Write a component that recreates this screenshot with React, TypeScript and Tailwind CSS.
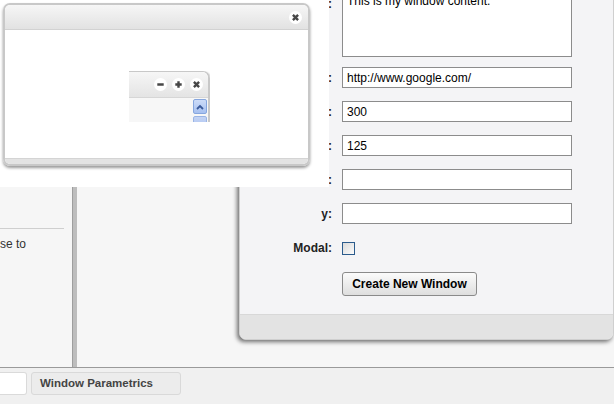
import type { ReactNode } from 'react'

// Small round title-bar buttons (minimise / maximise / close)
function CircleBtn({ kind }: { kind: 'min' | 'max' | 'close' }) {
  return (
    <svg width="13" height="13" viewBox="0 0 13 13" className="block">
      <circle cx="6.5" cy="6.5" r="6.5" fill="#fff" />
      {kind === 'min' && <path d="M3.3 6.5h6.4" stroke="#474747" strokeWidth="2.4" />}
      {kind === 'max' && <path d="M3.3 6.5h6.4M6.5 3.3v6.4" stroke="#474747" strokeWidth="2.4" />}
      {kind === 'close' && <path d="M3.9 3.9l5.2 5.2M9.1 3.9l-5.2 5.2" stroke="#474747" strokeWidth="2.4" />}
    </svg>
  )
}

function Row({ label, top, children, className }: { label: string; top?: boolean; children: ReactNode; className?: string }) {
  return (
    <div className={`flex ${top ? 'items-start' : 'items-center'} gap-[10px] ${className ?? ''}`}>
      <label className={`w-[92px] shrink-0 text-right text-[12px] font-bold text-[#222] leading-[14px] ${top ? 'pt-[4px]' : ''}`}>
        {label}
      </label>
      {children}
    </div>
  )
}

const inputCls =
  'block w-[230px] h-[21px] border border-[#8c8c8c] bg-white px-[4px] text-[12px] leading-[14px] text-black outline-none'

export default function App() {
  return (
    <div className="relative w-[614px] h-[404px] overflow-hidden bg-[#f6f6f6] flex flex-col font-['Liberation_Sans',Arial,sans-serif]">
      {/* page: left panel, splitter, main area */}
      <div className="flex flex-1 min-h-0">
        <div className="w-[72px] shrink-0 pt-[228px] overflow-hidden">
          <div className="w-[64px] border-t border-[#cfcfcf]" />
          <p className="mt-[8px] text-[12px] leading-[14px] text-[#333]">se to</p>
        </div>
        <div className="w-[5px] shrink-0 bg-[#bdbdbd] border-l border-[#9e9e9e]" />
        <div className="flex-1" />
      </div>

      {/* bottom tab bar */}
      <div className="h-[37px] shrink-0 border-t border-[#9a9a9a] bg-[#f0f0f0] flex items-start gap-[4px] pt-[4px]">
        <div className="w-[27px] h-[23px] bg-white border border-l-0 border-[#dadada] rounded-r-[3px]" />
        <div className="w-[150px] h-[23px] bg-[#ececec] border border-[#d9d9d9] rounded-[3px] pl-[8px] flex items-center text-[11.5px] font-bold text-[#444]">
          Window Parametrics
        </div>
      </div>

      {/* parameters window */}
      <div className="absolute left-[239px] top-[-30px] w-[375px] rounded-b-[7px] border border-[#cfcfcf] bg-[#f4f4f6] shadow-[-2px_2px_4px_rgba(0,0,0,0.55)] flex flex-col">
        <div className="pt-[22px] pb-[18px] flex flex-col">
          <Row label="Content:" top>
            <textarea
              readOnly
              defaultValue="This is my window content."
              className="block w-[230px] h-[64px] resize-none border border-[#8c8c8c] bg-white px-[4px] pt-0 text-[12px] leading-[14px] text-black outline-none"
            />
          </Row>
          <Row label="URL:" className="mt-[10px]">
            <input readOnly defaultValue="http://www.google.com/" className={inputCls} />
          </Row>
          <Row label="Width:" className="mt-[13px]">
            <input readOnly defaultValue="300" className={inputCls} />
          </Row>
          <Row label="Height:" className="mt-[13px]">
            <input readOnly defaultValue="125" className={inputCls} />
          </Row>
          <Row label="x:" className="mt-[13px]">
            <input readOnly defaultValue="" className={inputCls} />
          </Row>
          <Row label="y:" className="mt-[13px]">
            <input readOnly defaultValue="" className={inputCls} />
          </Row>
          <Row label="Modal:" className="mt-[17px]">
            <input
              type="checkbox"
              className="appearance-none block w-[13px] h-[13px] border border-[#2b5b8c] bg-linear-to-br from-[#dadada] to-[#fbfbfb]"
            />
          </Row>
          <Row label="" className="mt-[17px]">
            <button className="w-[135px] h-[24px] border border-[#8a8a8a] rounded-[3px] bg-linear-to-b from-[#fbfbfb] to-[#dedede] text-[12px] font-bold text-black leading-none">
              Create New Window
            </button>
          </Row>
        </div>
        <div className="h-[25px] bg-[#e3e3e3] border-t border-[#d8d8d8] rounded-b-[6px]" />
      </div>

      {/* dragged window preview on white */}
      <div className="absolute left-0 top-0 w-[329px] h-[187px] bg-white pl-[3px] pt-[3px]">
        <div className="w-[307px] h-[163px] rounded-[7px] border-2 border-[#c8c8c8] shadow-[0_2px_3px_rgba(0,0,0,0.4)] flex flex-col overflow-hidden">
          <div className="h-[25px] shrink-0 bg-linear-to-b from-[#f6f6f6] to-[#e2e2e2] border-b border-[#d2d2d2] flex items-center justify-end pr-[6px]">
            <CircleBtn kind="close" />
          </div>
          <div className="relative flex-1 bg-white">
            {/* clipped piece of another window */}
            <div className="absolute left-[124px] top-[41px] w-[81px] h-[51px] overflow-hidden">
              <div className="h-full flex flex-col rounded-tr-[7px] border-t border-r-2 border-[#c8c8c8] shadow-[1px_1px_2px_rgba(0,0,0,0.25)]">
                <div className="h-[26px] shrink-0 bg-linear-to-b from-[#f6f6f6] to-[#e4e4e4] border-b border-[#d6d6d6] flex items-center justify-end gap-[5px] pr-[5px] rounded-tr-[6px]">
                  <CircleBtn kind="min" />
                  <CircleBtn kind="max" />
                  <CircleBtn kind="close" />
                </div>
                <div className="flex-1 bg-[#f7f7f7] flex justify-end pr-[1px] pt-[1px]">
                  <div className="w-[14px] flex flex-col gap-[2px]">
                    <div className="h-[15px] rounded-[2px] border border-[#86a6de] bg-linear-to-b from-[#cddcf8] to-[#a6c0f0] flex items-center justify-center">
                      <svg width="8" height="6" viewBox="0 0 8 6">
                        <path d="M1 5l3-3 3 3" fill="none" stroke="#3a5a9a" strokeWidth="1.8" />
                      </svg>
                    </div>
                    <div className="h-[10px] rounded-[2px] border border-[#9ab4e4] bg-linear-to-b from-[#c4d4f4] to-[#b2c8f2]" />
                  </div>
                </div>
              </div>
            </div>
          </div>
          <div className="h-[6px] shrink-0 bg-[#e3e3e3] border-t border-[#d4d4d4]" />
        </div>
      </div>
    </div>
  )
}
